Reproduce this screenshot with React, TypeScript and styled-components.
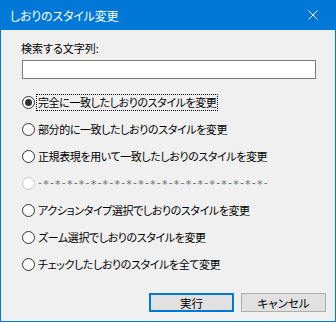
import React, { useState } from "react";
import styled, { createGlobalStyle } from "styled-components";

const GlobalStyle = createGlobalStyle`
  html, body {
    margin: 0;
    padding: 0;
    background: #ffffff;
  }
  * {
    box-sizing: border-box;
  }
`;

const font = `"Noto Sans CJK JP", "Noto Sans", sans-serif`;

const Window = styled.div`
  width: 336px;
  height: 322px;
  display: flex;
  flex-direction: column;
  border: 1px solid #0078d7;
  border-top: none;
  background: #f0f0f0;
  font-family: ${font};
  font-size: 11px;
  font-feature-settings: "palt";
  color: #000000;
`;

const TitleBar = styled.div`
  height: 30px;
  display: flex;
  align-items: center;
  justify-content: space-between;
  margin: 0 -1px;
  padding-left: 10px;
  background: #0078d7;
  color: #ffffff;
`;

const Title = styled.span`
  font-size: 12px;
  letter-spacing: -0.2px;
`;

const CloseButton = styled.div`
  width: 46px;
  height: 30px;
  display: flex;
  align-items: center;
  justify-content: center;
`;

const Body = styled.div`
  flex: 1;
  display: flex;
  flex-direction: column;
  padding: 0 19px 0 20px;
`;

const Label = styled.div`
  height: 16px;
  line-height: 16px;
  margin-top: 10px;
  font-size: 11px;
`;

const SearchInput = styled.input`
  height: 19px;
  width: 294px;
  margin: 4px 0 0 1px;
  border: 1px solid #7a7a7a;
  background: #ffffff;
  outline: none;
  padding: 0 3px;
  font: inherit;
`;

const RadioList = styled.div`
  display: flex;
  flex-direction: column;
  margin-top: 10px;
`;

const RadioRow = styled.label<{ $disabled?: boolean }>`
  height: 27px;
  display: flex;
  align-items: center;
  gap: 1px;
  padding-left: 1px;
  color: ${(p) => (p.$disabled ? "#6d6d6d" : "#000000")};
`;

const Circle = styled.span<{ $checked?: boolean; $disabled?: boolean }>`
  width: 13px;
  height: 13px;
  flex: none;
  border-radius: 50%;
  border: 1px solid ${(p) => (p.$disabled ? "#c4c4c4" : "#333333")};
  background: #ffffff;
  display: flex;
  align-items: center;
  justify-content: center;
  &::after {
    content: "";
    width: 7px;
    height: 7px;
    border-radius: 50%;
    background: #333333;
    display: ${(p) => (p.$checked ? "block" : "none")};
  }
`;

const RadioText = styled.span<{ $focused?: boolean; $separator?: boolean }>`
  line-height: 15px;
  padding: 0 1px;
  border: 1px dotted ${(p) => (p.$focused ? "#000000" : "transparent")};
  letter-spacing: ${(p) => (p.$separator ? "1.2px" : "-0.4px")};
  font-family: ${(p) => (p.$separator ? `"DejaVu Sans", sans-serif` : "inherit")};
  white-space: nowrap;
`;

const Star = styled.span`
  vertical-align: -2px;
`;

const ButtonRow = styled.div`
  display: flex;
  justify-content: flex-end;
  gap: 7px;
  margin-top: 15px;
  margin-right: -10px;
`;

const Button = styled.button<{ $primary?: boolean }>`
  width: 85px;
  height: 19px;
  padding: 0;
  font: inherit;
  font-size: 11.5px;
  color: #000000;
  background: #e1e1e1;
  border: ${(p) => (p.$primary ? "2px solid #0078d7" : "1px solid #adadad")};
  display: flex;
  align-items: center;
  justify-content: center;
`;

const SEPARATOR = "-*".repeat(19) + "-";

const options = [
  "完全に一致したしおりのスタイルを変更",
  "部分的に一致したしおりのスタイルを変更",
  "正規表現を用いて一致したしおりのスタイルを変更",
  SEPARATOR,
  "アクションタイプ選択でしおりのスタイルを変更",
  "ズーム選択でしおりのスタイルを変更",
  "チェックしたしおりのスタイルを全て変更",
];

function renderText(text: string) {
  if (text !== SEPARATOR) return text;
  return text
    .split("")
    .map((ch, i) => (ch === "*" ? <Star key={i}>*</Star> : ch));
}

export default function App() {
  const [selected, setSelected] = useState(0);

  return (
    <>
      <GlobalStyle />
      <Window>
        <TitleBar>
          <Title>しおりのスタイル変更</Title>
          <CloseButton>
            <svg width="10" height="10" viewBox="0 0 10 10">
              <path d="M0.5 0.5 L9.5 9.5 M9.5 0.5 L0.5 9.5" stroke="#ffffff" strokeWidth="1" />
            </svg>
          </CloseButton>
        </TitleBar>
        <Body>
          <Label>検索する文字列:</Label>
          <SearchInput />
          <RadioList>
            {options.map((text, i) => (
              <RadioRow
                key={i}
                $disabled={i === 3}
                onClick={() => i !== 3 && setSelected(i)}
              >
                <Circle $checked={selected === i} $disabled={i === 3} />
                <RadioText $focused={i === 0} $separator={i === 3}>
                  {renderText(text)}
                </RadioText>
              </RadioRow>
            ))}
          </RadioList>
          <ButtonRow>
            <Button $primary>実行</Button>
            <Button>キャンセル</Button>
          </ButtonRow>
        </Body>
      </Window>
    </>
  );
}
